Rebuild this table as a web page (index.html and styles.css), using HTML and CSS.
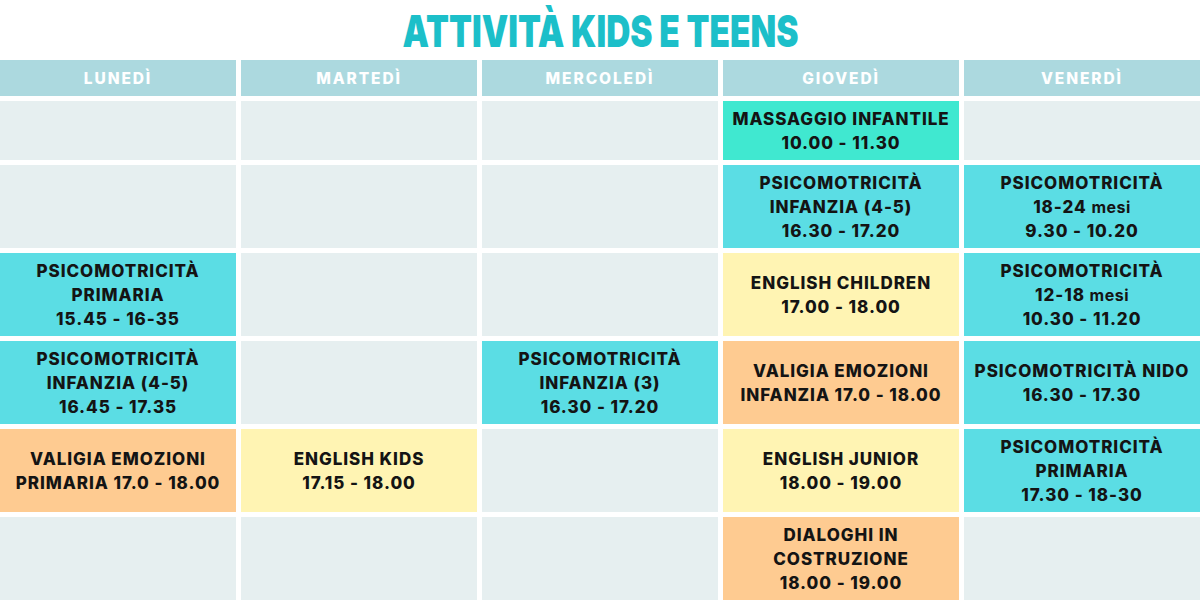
FILE: index.html
```html
<!DOCTYPE html>
<html lang="it">
<head>
<meta charset="utf-8">
<title>Attività Kids e Teens</title>
<link rel="stylesheet" href="styles.css">
</head>
<body>
<div class="page">
  <header class="title-bar">
    <h1 class="title"><span class="title-text">ATTIVITÀ KIDS E TEENS</span></h1>
  </header>
  <main class="grid">
    <div class="head">LUNEDÌ</div>
    <div class="head">MARTEDÌ</div>
    <div class="head">MERCOLEDÌ</div>
    <div class="head">GIOVEDÌ</div>
    <div class="head">VENERDÌ</div>

    <div class="cell empty"></div>
    <div class="cell empty"></div>
    <div class="cell empty"></div>
    <div class="cell mint"><p class="txt">MASSAGGIO INFANTILE<br>10.00 - 11.30</p></div>
    <div class="cell empty"></div>

    <div class="cell empty"></div>
    <div class="cell empty"></div>
    <div class="cell empty"></div>
    <div class="cell cyan"><p class="txt">PSICOMOTRICITÀ<br>INFANZIA (4-5)<br>16.30 - 17.20</p></div>
    <div class="cell cyan"><p class="txt">PSICOMOTRICITÀ<br>18-24 <span class="low">mesi</span><br>9.30 - 10.20</p></div>

    <div class="cell cyan"><p class="txt">PSICOMOTRICITÀ<br>PRIMARIA<br>15.45 - 16-35</p></div>
    <div class="cell empty"></div>
    <div class="cell empty"></div>
    <div class="cell yellow"><p class="txt">ENGLISH CHILDREN<br>17.00 - 18.00</p></div>
    <div class="cell cyan"><p class="txt">PSICOMOTRICITÀ<br>12-18 <span class="low">mesi</span><br>10.30 - 11.20</p></div>

    <div class="cell cyan"><p class="txt">PSICOMOTRICITÀ<br>INFANZIA (4-5)<br>16.45 - 17.35</p></div>
    <div class="cell empty"></div>
    <div class="cell cyan"><p class="txt">PSICOMOTRICITÀ<br>INFANZIA (3)<br>16.30 - 17.20</p></div>
    <div class="cell orange"><p class="txt">VALIGIA EMOZIONI<br>INFANZIA 17.0 - 18.00</p></div>
    <div class="cell cyan"><p class="txt">PSICOMOTRICITÀ NIDO<br>16.30 - 17.30</p></div>

    <div class="cell orange"><p class="txt">VALIGIA EMOZIONI<br>PRIMARIA 17.0 - 18.00</p></div>
    <div class="cell yellow"><p class="txt">ENGLISH KIDS<br>17.15 - 18.00</p></div>
    <div class="cell empty"></div>
    <div class="cell yellow"><p class="txt">ENGLISH JUNIOR<br>18.00 - 19.00</p></div>
    <div class="cell cyan"><p class="txt">PSICOMOTRICITÀ<br>PRIMARIA<br>17.30 - 18-30</p></div>

    <div class="cell empty"></div>
    <div class="cell empty"></div>
    <div class="cell empty"></div>
    <div class="cell orange"><p class="txt">DIALOGHI IN<br>COSTRUZIONE<br>18.00 - 19.00</p></div>
    <div class="cell empty"></div>
  </main>
</div>
</body>
</html>
```

FILE: styles.css
```css
html, body {
  margin: 0;
  padding: 0;
  background: #ffffff;
}

.page {
  width: 1200px;
  height: 600px;
  overflow: hidden;
  font-family: Inter, "Liberation Sans", sans-serif;
}

.title-bar {
  height: 60px;
  display: flex;
  align-items: center;
  justify-content: center;
}

.title {
  margin: 0;
  padding-top: 2px;
  font-size: 44px;
  font-weight: 900;
  line-height: 1;
  color: #1cbfc9;
  letter-spacing: 0;
}

.title-text {
  display: inline-block;
  transform: scaleX(0.76);
}

.grid {
  display: grid;
  grid-template-columns: repeat(5, 236px);
  grid-template-rows: 36px 59px repeat(5, 83px);
  column-gap: 5px;
  row-gap: 5px;
}

.head {
  background: #acd9df;
  color: #ffffff;
  font-size: 15.5px;
  font-weight: 800;
  letter-spacing: 1.9px;
  display: flex;
  align-items: center;
  justify-content: center;
}

.cell {
  display: flex;
  align-items: center;
  justify-content: center;
  text-align: center;
}

.txt {
  margin: 0;
  font-size: 17px;
  font-weight: 800;
  letter-spacing: 0.95px;
  line-height: 24px;
  color: #141414;
  white-space: nowrap;
}

.low {
  font-size: 16px;
  font-weight: 700;
  letter-spacing: 0.5px;
}

.empty { background: #e6eff0; }
.cyan { background: #5bdde4; }
.mint { background: #40e8d0; }
.yellow { background: #fff4b3; }
.orange { background: #fecb91; }
```
